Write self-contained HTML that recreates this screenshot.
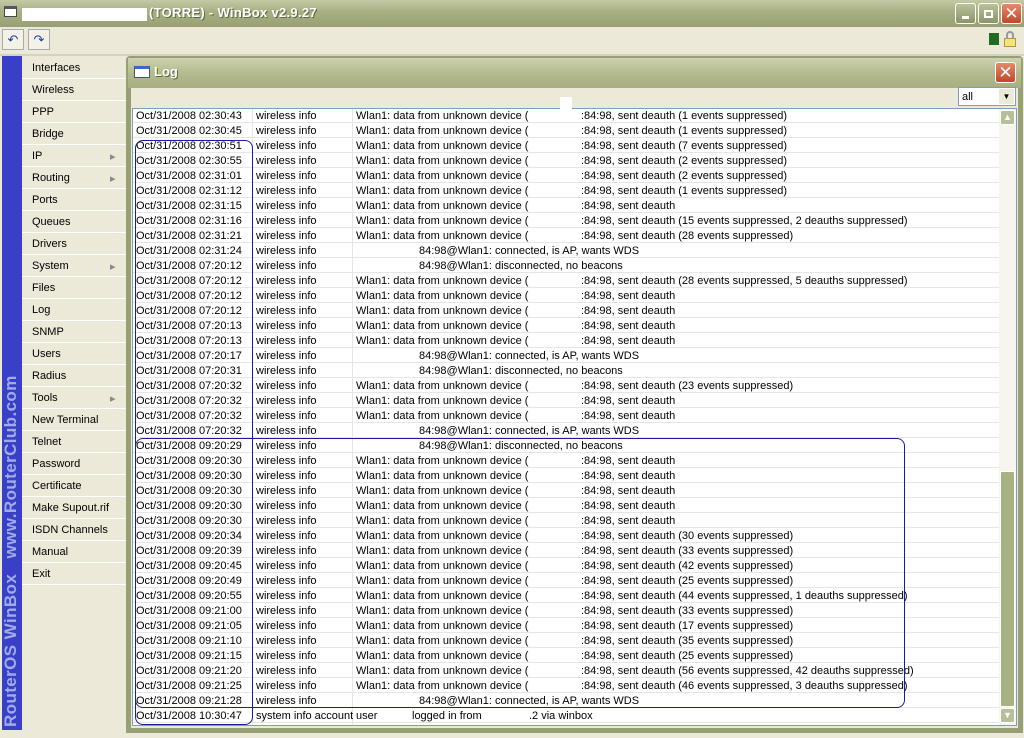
<!DOCTYPE html>
<html><head><meta charset="utf-8"><style>
*{margin:0;padding:0;box-sizing:border-box}
body{width:1024px;height:738px;overflow:hidden;background:#ece9d8;font-family:"Liberation Sans",sans-serif;font-size:11px;color:#000;position:relative}
.abs{position:absolute}
.tb{left:0;top:0;width:1024px;height:27px;background:linear-gradient(#c3c9a4,#a9b184 40%,#97a074);}
.tt{left:18px;top:5px;color:#fff;font-weight:bold;font-size:13px;letter-spacing:.3px;text-shadow:1px 1px 0 #606840}
.wb{top:3px;width:21px;height:21px;border:1px solid #fff;border-radius:3px;background:linear-gradient(#b9c198,#8c956a)}
.menu div{position:absolute;left:22px;width:104px;height:22px;border-bottom:1px solid #fff;padding:5px 0 0 10px;font-size:11px}
.row{position:absolute;left:133px;width:866px;height:15px;border-bottom:1px solid #e6e6e6;white-space:nowrap}
.row span{position:absolute;top:2px}
</style></head><body>
<div class="abs tb"></div>
<div class="abs" style="left:4px;top:6px;width:13px;height:11px;background:#fff;border:1px solid #445;border-top:3px solid #556"></div>
<div class="abs" style="left:22px;top:8px;width:125px;height:13px;background:#fff"></div>
<div class="abs tt" style="left:149px">(TORRE) - WinBox v2.9.27</div>
<div class="abs wb" style="left:955px"><div class="abs" style="left:6px;top:12px;width:7px;height:3px;background:#fff"></div></div>
<div class="abs wb" style="left:978px"><div class="abs" style="left:5px;top:6px;width:9px;height:8px;border:2px solid #fff"></div></div>
<div class="abs wb" style="left:1001px;background:linear-gradient(#e48a6a,#c2472a);color:#fff;font-size:17px;text-align:center;line-height:19px">✕</div>
<div class="abs" style="left:2px;top:29px;width:22px;height:21px;border:1px solid #aaa;background:#f4f2e8;color:#1a3ea8;text-align:center;line-height:19px;font-size:13px">↶</div>
<div class="abs" style="left:28px;top:29px;width:22px;height:21px;border:1px solid #aaa;background:#f4f2e8;color:#1a3ea8;text-align:center;line-height:19px;font-size:13px">↷</div>
<div class="abs" style="left:989px;top:33px;width:10px;height:12px;background:#1f6b1f"></div>
<div class="abs" style="left:1004px;top:38px;width:12px;height:9px;background:#f2e37a;border:1px solid #b09a30"></div>
<div class="abs" style="left:1006px;top:31px;width:8px;height:8px;border:2px solid #999;border-bottom:none;border-radius:4px 4px 0 0"></div>
<div class="abs" style="left:0;top:54px;width:1024px;height:2px;background:#d6d2c0"></div>
<div class="abs" style="left:2px;top:56px;width:20px;height:674px;background:#3a3fc8"></div>
<div class="abs" style="left:1px;top:727px;transform-origin:0 0;transform:rotate(-90deg);width:370px;height:20px;color:#a0acea;font-size:17px;font-weight:bold;line-height:20px;white-space:nowrap;letter-spacing:.4px">RouterOS WinBox &nbsp; www.RouterClub.com</div>
<div class="menu">
<div style="top:57px">Interfaces</div><div style="top:79px">Wireless</div><div style="top:101px">PPP</div><div style="top:123px">Bridge</div><div style="top:145px">IP<span style="position:absolute;left:88px;color:#888">▸</span></div><div style="top:167px">Routing<span style="position:absolute;left:88px;color:#888">▸</span></div><div style="top:189px">Ports</div><div style="top:211px">Queues</div><div style="top:233px">Drivers</div><div style="top:255px">System<span style="position:absolute;left:88px;color:#888">▸</span></div><div style="top:277px">Files</div><div style="top:299px">Log</div><div style="top:321px">SNMP</div><div style="top:343px">Users</div><div style="top:365px">Radius</div><div style="top:387px">Tools<span style="position:absolute;left:88px;color:#888">▸</span></div><div style="top:409px">New Terminal</div><div style="top:431px">Telnet</div><div style="top:453px">Password</div><div style="top:475px">Certificate</div><div style="top:497px">Make Supout.rif</div><div style="top:519px">ISDN Channels</div><div style="top:541px">Manual</div><div style="top:563px">Exit</div>
</div>
<div class="abs" style="left:126px;top:56px;width:897px;height:677px;background:#97a074;border-radius:4px 4px 0 0"></div>
<div class="abs" style="left:128px;top:58px;width:893px;height:30px;background:linear-gradient(#cdd3b0,#b3bb8e 50%,#a7af82)"></div>
<div class="abs" style="left:134px;top:66px;width:16px;height:12px;background:#fff;border:1px solid #456;border-top:3px solid #3a6ac8"></div>
<div class="abs" style="left:154px;top:64px;color:#fff;font-weight:bold;font-size:13px;text-shadow:1px 1px 0 #606840">Log</div>
<div class="abs" style="left:995px;top:62px;width:21px;height:21px;border:1px solid #fff;border-radius:3px;background:linear-gradient(#e48a6a,#c2472a);color:#fff;font-size:17px;text-align:center;line-height:19px">✕</div>
<div class="abs" style="left:131px;top:88px;width:887px;height:640px;background:#ece9d8"></div>
<div class="abs" style="left:958px;top:87px;width:58px;height:19px;background:#fff;border:1px solid #7f9db9;padding:3px 0 0 3px">all<span style="position:absolute;right:1px;top:1px;width:15px;height:15px;background:#ece9d8;font-size:8px;text-align:center;line-height:15px">▼</span></div>
<div class="abs" style="left:132px;top:108px;width:885px;height:618px;background:#fff;border:1px solid #7f9db9"></div>
<div class="abs" style="left:252px;top:109px;width:1px;height:616px;background:#e6e6e6"></div>
<div class="abs" style="left:352px;top:109px;width:1px;height:616px;background:#e6e6e6"></div>
<div class="abs" style="left:999px;top:109px;width:17px;height:616px;background:#f7f6ee"></div>
<div class="abs" style="left:1000px;top:110px;width:15px;height:15px;border:1px solid #fff;border-radius:2px;background:#b6c096;color:#fff;font-size:9px;text-align:center;line-height:13px">▲</div>
<div class="abs" style="left:1000px;top:471px;width:15px;height:236px;border:1px solid #fff;border-radius:2px;background:#a6b282"></div>
<div class="abs" style="left:1000px;top:708px;width:15px;height:15px;border:1px solid #fff;border-radius:2px;background:#b6c096;color:#fff;font-size:9px;text-align:center;line-height:13px">▼</div>
<div id="rows"></div>
<div class="abs" style="left:560px;top:97px;width:12px;height:12px;background:#fff"></div>
<div class="abs" style="left:135px;top:140px;width:118px;height:585px;border:1px solid #1a1a9a;border-radius:8px"></div>
<div class="abs" style="left:135px;top:438px;width:770px;height:270px;border:1px solid #1a1a9a;border-radius:8px"></div>
<script>
var D=[["02:30:43","d","(1 events suppressed)"],["02:30:45","d","(1 events suppressed)"],["02:30:51","d","(7 events suppressed)"],["02:30:55","d","(2 events suppressed)"],["02:31:01","d","(2 events suppressed)"],["02:31:12","d","(1 events suppressed)"],["02:31:15","d",""],["02:31:16","d","(15 events suppressed, 2 deauths suppressed)"],["02:31:21","d","(28 events suppressed)"],["02:31:24","c","connected, is AP, wants WDS"],["07:20:12","c","disconnected, no beacons"],["07:20:12","d","(28 events suppressed, 5 deauths suppressed)"],["07:20:12","d",""],["07:20:12","d",""],["07:20:13","d",""],["07:20:13","d",""],["07:20:17","c","connected, is AP, wants WDS"],["07:20:31","c","disconnected, no beacons"],["07:20:32","d","(23 events suppressed)"],["07:20:32","d",""],["07:20:32","d",""],["07:20:32","c","connected, is AP, wants WDS"],["09:20:29","c","disconnected, no beacons"],["09:20:30","d",""],["09:20:30","d",""],["09:20:30","d",""],["09:20:30","d",""],["09:20:30","d",""],["09:20:34","d","(30 events suppressed)"],["09:20:39","d","(33 events suppressed)"],["09:20:45","d","(42 events suppressed)"],["09:20:49","d","(25 events suppressed)"],["09:20:55","d","(44 events suppressed, 1 deauths suppressed)"],["09:21:00","d","(33 events suppressed)"],["09:21:05","d","(17 events suppressed)"],["09:21:10","d","(35 events suppressed)"],["09:21:15","d","(25 events suppressed)"],["09:21:20","d","(56 events suppressed, 42 deauths suppressed)"],["09:21:25","d","(46 events suppressed, 3 deauths suppressed)"],["09:21:28","c","connected, is AP, wants WDS"],["10:30:47","s",""]];
var h="";D.forEach(function(r,i){var y=108+i*15;var dt="Oct/31/2008 "+r[0];
var m;if(r[1]=="d")m='<span style="left:223px">Wlan1: data from unknown device (</span><span style="left:448px">:84:98, sent deauth'+(r[2]?" "+r[2]:"")+'</span>';
else if(r[1]=="c")m='<span style="left:286px">84:98@Wlan1: '+r[2]+'</span>';
else m='<span style="left:223px">user</span><span style="left:279px">logged in from</span><span style="left:396px">.2 via winbox</span>';
h+='<div class="row" style="top:'+y+'px"><span style="left:3px">'+dt+'</span><span style="left:123px">'+(r[1]=="s"?"system info account":"wireless info")+'</span>'+m+'</div>';});
document.getElementById("rows").innerHTML=h;
</script>
</body></html>
